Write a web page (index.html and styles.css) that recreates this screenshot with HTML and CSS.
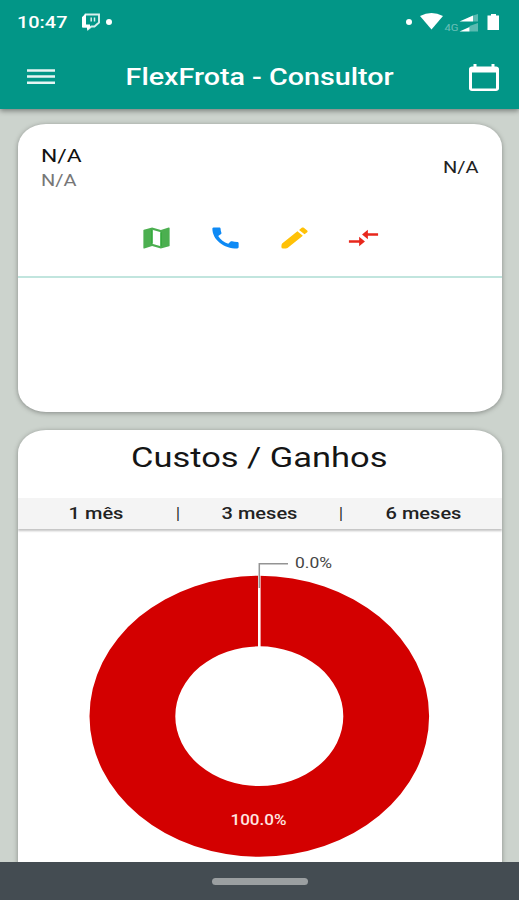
FILE: index.html
```html
<!DOCTYPE html>
<html lang="pt-BR">
<head>
<meta charset="utf-8">
<title>FlexFrota - Consultor</title>
<link rel="stylesheet" href="styles.css">
</head>
<body>
<div class="screen">
  <header class="top">
    <div class="status">
      <span class="clock">10:47</span>
      <svg class="twitch" viewBox="0 0 20 18"><path d="M4.500 1.500H18v8l-4.500 4h-3.200l-3 2.500V13.500H3V4z" fill="none" stroke="#fff" stroke-opacity=".85" stroke-width="1.900"/><path d="M1 4l4-3v10.500h4v3l-3 2.500v-2.500H1z" fill="#fff"/><path d="M10.200 4.500v4M13.500 4.500v4" stroke="#fff" stroke-opacity=".85" stroke-width="1.500"/></svg>
      <i class="dot"></i>
      <i class="dot dot-right"></i>
      <svg class="signals" viewBox="0 0 80 24"><path d="M0 6Q11.500 0 23 6L11.500 19.500z" fill="#fff"/><text x="24.500" y="20.500" textLength="14" lengthAdjust="spacingAndGlyphs" class="net">4G</text><path d="M39.500 11.500L53 5.500v6zM39.500 21.500L49.500 17v4.500z" fill="#fff"/><path d="M53 5.500l5-1.500v7.500h-5zM49.500 16l8.500-3v8.500h-8.500z" fill="#fff" opacity=".35"/><path d="M67.500 5.500h3.500v-1.500h5v1.500h3V20H67.500z" fill="#fff"/></svg>
    </div>
    <div class="appbar">
      <svg class="menu" viewBox="0 0 28 18"><path d="M0 2.500h28M0 8.500h28M0 14.800h28" stroke="#fff" stroke-opacity=".9" stroke-width="2.500"/></svg>
      <h1 class="title">FlexFrota - Consultor</h1>
      <svg class="calendar" viewBox="2 1 20 22" preserveAspectRatio="none"><path d="M20 3h-1V1h-2v2H7V1H5v2H4c-1.100 0-2 .9-2 2v16c0 1.100.9 2 2 2h16c1.100 0 2-.9 2-2V5c0-1.100-.9-2-2-2zm0 18H4V8h16v13z" fill="#fff"/></svg>
    </div>
  </header>
  <main class="content">
    <section class="card vehicle">
      <div class="info">
        <div class="names">
          <span class="name">N/A</span>
          <span class="sub">N/A</span>
        </div>
        <span class="value">N/A</span>
      </div>
      <div class="actions">
        <svg viewBox="0 0 24 24" preserveAspectRatio="none"><path d="M20.500 3l-.16.03L15 5.100 9 3 3.360 4.900c-.21.07-.36.25-.36.48V20.500c0 .28.22.5.5.5l.16-.03L9 18.900l6 2.100 5.640-1.900c.21-.07.36-.25.36-.48V3.500c0-.28-.22-.5-.5-.5zM15 19l-6-2.110V5l6 2.110V19z" fill="#4caf50"/><path d="M9 5v11.890M15 7.110V19" stroke="#1fa52b" stroke-width=".8"/></svg>
        <svg viewBox="0 0 24 24" preserveAspectRatio="none"><path d="M20.010 15.380c-1.230 0-2.420-.2-3.530-.56-.35-.12-.74-.03-1.010.24l-1.570 1.970c-2.830-1.350-5.480-3.900-6.890-6.830l1.950-1.660c.27-.28.35-.67.24-1.020-.37-1.110-.56-2.300-.56-3.530 0-.54-.45-.99-.99-.99H4.190C3.650 3 3 3.240 3 3.990 3 13.280 10.730 21 20.010 21c.71 0 .99-.63.99-1.180v-3.450c0-.54-.45-.99-.99-.99z" fill="#0e8af5"/></svg>
        <svg viewBox="0 0 24 24" preserveAspectRatio="none"><path d="M3.500 16.800L14 6.300l3.700 3.700L7.200 20.500Q6.500 21 4.300 21 3 21 3 19.700q0-2.300.5-2.900zM20.710 7.040c.39-.39.39-1.020 0-1.410l-2.340-2.340c-.39-.39-1.020-.39-1.410 0l-1.830 1.830 3.750 3.750 1.830-1.830z" fill="#ffc107"/></svg>
        <svg viewBox="0 0 24 24" preserveAspectRatio="none"><path d="M9.010 14H2v2h7.010v3L13 15l-3.990-4v3zm5.980-1v-3H22V8h-7.010V5L11 9l3.990 4z" fill="#e8271c"/></svg>
      </div>
    </section>
    <section class="card costs">
      <h2 class="heading"><span>Custos / Ganhos</span></h2>
      <nav class="tabs">
        <span class="tab">1 mês</span><i class="sep">|</i>
        <span class="tab">3 meses</span><i class="sep">|</i>
        <span class="tab">6 meses</span>
      </nav>
      <svg class="chart" viewBox="18 532 484 331">
        <path fill="#d30000" fill-rule="evenodd" d="M89.500 716.200a169.800 140.500 0 1 0 339.600 0a169.800 140.500 0 1 0-339.600 0zM175.300 716.200a84 69.800 0 1 0 168 0a84 69.800 0 1 0-168 0z"/>
        <path d="M259.300 575v73" stroke="#fff" stroke-width="2.600"/>
        <path d="M259.300 588V563.700H288" fill="none" stroke="#949494" stroke-width="1.500"/>
        <text class="label" x="295" y="568" textLength="37" lengthAdjust="spacingAndGlyphs">0.0%</text>
        <text class="label inner" x="230.500" y="825" textLength="56" lengthAdjust="spacingAndGlyphs">100.0%</text>
      </svg>
    </section>
  </main>
  <footer class="navbar"><i class="pill"></i></footer>
</div>
</body>
</html>
```
FILE: styles.css
```css
* { box-sizing: border-box; }
body { margin: 0; font-family: Roboto, "Liberation Sans", sans-serif; }
i { font-style: normal; }
svg { display: block; flex: none; }
.screen { width: 519px; height: 900px; display: flex; flex-direction: column; overflow: hidden; background: #ccd3cd; }
.top { height: 109px; flex: none; background: #029687; color: #fff; box-shadow: 0 2px 5px rgba(0,0,0,.4); z-index: 1; }
.status { height: 44px; display: flex; align-items: center; padding: 0 18px 0 17px; }
.clock { width: 64px; font-size: 17px; font-weight: 500; transform: scaleX(1.17); transform-origin: left; }
.twitch { width: 20px; height: 18px; }
.dot { width: 6px; height: 6px; border-radius: 50%; background: #fff; margin-left: 5px; }
.dot-right { margin-left: auto; margin-right: 7px; }
.signals { width: 82px; height: 24px; }
.net { font-size: 9px; fill: #fff; opacity: .4; }
.appbar { height: 66px; display: flex; align-items: center; padding: 0 20px 0 27px; }
.menu { width: 28px; height: 18px; }
.title { flex: 1; margin: 0; padding-right: 4px; text-align: center; font-size: 24px; line-height: 30px; font-weight: 500; transform: scaleX(1.195); }
.calendar { width: 30px; height: 27px; }
.content { flex: 1; min-height: 0; display: flex; flex-direction: column; gap: 18px; padding: 15px 17px 0 18px; overflow: hidden; }
.card { flex: none; background: #fff; border-radius: 28px / 23px; box-shadow: 0 1px 5px rgba(0,0,0,.35); overflow: hidden; }
.vehicle { height: 287.500px; }
.info { height: 77px; display: flex; align-items: center; justify-content: space-between; padding: 11px 24px 0 23px; }
.names { display: flex; flex-direction: column; }
.name, .sub, .value { line-height: 24px; }
.name { font-size: 18px; color: #111; transform: scaleX(1.27); transform-origin: left; }
.sub { font-size: 16px; color: #777; transform: translateY(1px) scaleX(1.25); transform-origin: left; }
.value { font-size: 16px; color: #222; transform: scaleX(1.25); transform-origin: right; }
.actions { height: 76.500px; display: flex; justify-content: center; align-items: center; gap: 34px; border-bottom: 2px solid #c1e5de; }
.actions svg { width: 35px; height: 28px; }
.costs { height: 470px; }
.heading { margin: 0; height: 68px; padding-top: 10px; text-align: center; font-size: 28px; line-height: 36px; font-weight: 400; color: #151515; }
.heading span { display: inline-block; transform: translateX(-1px) scaleX(1.23); }
.tabs { height: 31px; display: grid; grid-template-columns: 156px 8px 155px 8px 157px; align-items: center; text-align: center; background: #f4f4f4; box-shadow: 0 2px 2px rgba(0,0,0,.24); font-size: 16px; line-height: 20px; padding-top: 1px; font-weight: 500; color: #222; }
.tab { transform: scaleX(1.25); }
.sep { font-weight: 400; }
.chart { width: 484px; height: 331px; margin-top: 3.500px; }
.label { font-size: 14px; fill: #444; }
.inner { fill: #ffe5e0; font-weight: 500; }
.navbar { height: 38px; flex: none; background: #444c52; display: flex; justify-content: center; align-items: center; }
.pill { width: 96px; height: 7px; border-radius: 4px; background: #9b9fa1; }
```
